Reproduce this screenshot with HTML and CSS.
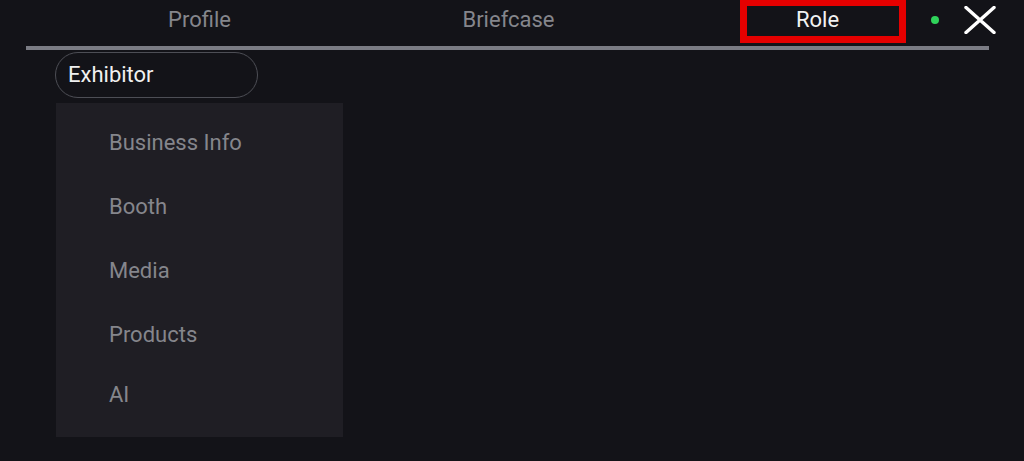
FILE: index.html
```html
<!DOCTYPE html>
<html lang="en">
<head>
<meta charset="utf-8">
<title>Role</title>
<link rel="stylesheet" href="styles.css">
</head>
<body>
<div class="app">
  <header class="header">
    <nav class="tabs">
      <div class="tab">Profile</div>
      <div class="tab">Briefcase</div>
      <div class="tab tab-active">Role<span class="highlight"></span></div>
    </nav>
    <span class="status-dot"></span>
    <button class="close" aria-label="Close">
      <svg width="32" height="28" viewBox="0 0 32 28"><path d="M2 1.5 L30 26.5 M30 1.5 L2 26.5" stroke="#ffffff" stroke-width="3.4" stroke-linecap="round" fill="none"/></svg>
    </button>
  </header>
  <div class="divider"></div>
  <div class="role-select">Exhibitor</div>
  <ul class="menu">
    <li class="menu-item">Business Info</li>
    <li class="menu-item">Booth</li>
    <li class="menu-item">Media</li>
    <li class="menu-item">Products</li>
    <li class="menu-item menu-item-last">AI</li>
  </ul>
</div>
</body>
</html>
```

FILE: styles.css
```css
html, body {
  margin: 0;
  padding: 0;
  background: #131318;
  overflow: hidden;
}
.app {
  width: 1024px;
  height: 461px;
  font-family: Roboto, "Noto Sans", sans-serif;
  font-size: 22px;
  color: #86878d;
}
.header {
  position: relative;
  height: 46px;
}
.tabs {
  display: flex;
  margin-left: 45px;
}
.tab {
  position: relative;
  width: 309px;
  line-height: 40px;
  text-align: center;
  color: #85868c;
}
.tab-active {
  color: #f2f2f2;
}
.highlight {
  position: absolute;
  left: 77px;
  top: -1px;
  width: 166px;
  height: 44px;
  box-sizing: border-box;
  border: 7px solid #e50000;
}
.status-dot {
  position: absolute;
  left: 931px;
  top: 16px;
  width: 8px;
  height: 8px;
  border-radius: 50%;
  background: #2fd35a;
}
.close {
  position: absolute;
  left: 964px;
  top: 6px;
  padding: 0;
  border: 0;
  background: none;
  display: flex;
}
.divider {
  margin-left: 26px;
  width: 963px;
  height: 4px;
  background: #7b7c84;
}
.role-select {
  margin: 2px 0 0 55px;
  width: 203px;
  height: 46px;
  box-sizing: border-box;
  border: 1.5px solid #4d4e55;
  border-radius: 23px;
  padding-left: 12px;
  line-height: 43px;
  color: #f0f0f0;
}
.menu {
  list-style: none;
  margin: 5px 0 0 56px;
  padding: 8px 0 0 53px;
  width: 287px;
  height: 334px;
  box-sizing: border-box;
  background: #1f1e24;
}
.menu-item {
  line-height: 64px;
  color: #85868c;
}
.menu-item-last {
  line-height: 56px;
}
```
